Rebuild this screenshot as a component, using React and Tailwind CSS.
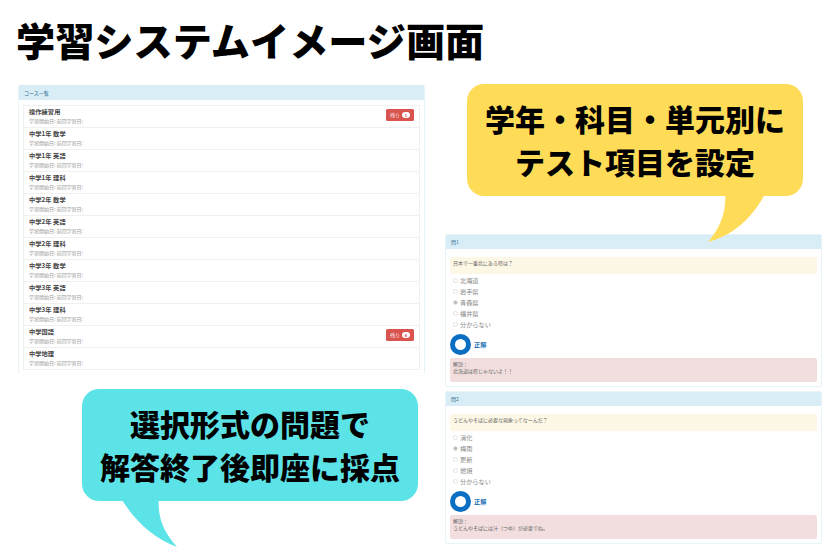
const FONT = { fontFamily: '"Noto Sans CJK JP", "Noto Sans", sans-serif' };
const courses = [
  ["操作練習用", 1], ["中学1年 数学"], ["中学1年 英語"], ["中学1年 理科"],
  ["中学2年 数学"], ["中学2年 英語"], ["中学2年 理科"], ["中学3年 数学"],
  ["中学3年 英語"], ["中学3年 理科"], ["中学国語", 6], ["中学地理"],
];

function CourseRow({ name, badge }) {
  return (
    <div className="h-[22px] shrink-0 border-b border-[#f0f0f0] pl-[5px] pr-[5px] flex items-center justify-between">
      <div className="-mt-px">
        <div className="text-[6.2px] leading-[8.5px] font-bold tracking-[0.1px] text-[#444444]">{name}</div>
        <div className="text-[5px] leading-[7px] text-[#999999]">学習開始日: 前回学習日:</div>
      </div>
      {badge && (
        <div className="-mt-[3px] w-[28px] h-[12px] rounded-[1.5px] bg-[#d9534f] flex items-center justify-center gap-[2px] text-[5px] text-[#fbe4e3]">
          <span>残り</span>
          <span className="w-[8px] h-[6px] rounded-full bg-white text-[#d9534f] text-[4px] leading-[6px] text-center font-bold">{badge}</span>
        </div>
      )}
    </div>
  );
}

function Question({ title, question, options, selected, note }) {
  return (
    <section className="w-[377px] h-[153px] border border-[#e6f3f9] rounded-[2px] overflow-hidden bg-white">
      <div className="h-[14px] bg-[#d9edf7] pl-[5px] text-[5px] leading-[14px] text-[#31708f]">{title}</div>
      <div className="px-[4px] pt-[8px]">
        <div className="h-[17px] bg-[#fdf7e5] rounded-[2px] pl-[3px] pt-[1px] text-[5px] leading-[9px] text-[#666666]">{question}</div>
        <ul className="mt-[1px] pl-[3px]">
          {options.map((o, i) => (
            <li key={o} className="h-[11px] flex items-center gap-[2px] text-[6.2px] text-[#888888]">
              <span className={`w-[5px] h-[5px] rounded-full border border-[#e4e4e4] ${i === selected ? "bg-[#bbbbbb]" : "bg-white"}`} />
              {o}
            </li>
          ))}
        </ul>
        <div className="mt-[4px] h-[21px] flex items-center gap-[3px]">
          <span className="w-[21px] h-[21px] rounded-full border-[5px] border-[#0a6fc2] bg-white" />
          <span className="text-[6.2px] font-bold text-[#1a6fb5]">正解</span>
        </div>
        <div className="mt-[3px] h-[24px] rounded-[2px] bg-[#f2dede] pl-[3px] pt-[2px] text-[5px] leading-[7px] text-[#666666]">
          <div>解説：</div>
          <div>{note}</div>
        </div>
      </div>
    </section>
  );
}

export default function App() {
  return (
    <div className="w-[840px] h-[560px] overflow-hidden bg-white" style={FONT}>
      <h1 className="h-[84px] pl-[16px] pt-[11px] text-[39.2px] leading-[56px] font-black text-black whitespace-nowrap">学習システムイメージ画面</h1>

      <div className="flex">
        <div className="w-[445px] shrink-0 pl-[18px] pt-px">
          <div className="w-[407px] h-[288px] border-x border-[#e6f3f9] rounded-t-[2px] overflow-hidden bg-white">
            <div className="h-[15px] bg-[#d9edf7] pl-[5px] text-[5px] leading-[15px] text-[#31708f]">コース一覧</div>
            <div className="mx-[4px] mt-[5px] border-x border-t border-[#f0f0f0]">
              {courses.map(([n, b]) => <CourseRow key={n} name={n} badge={b} />)}
            </div>
          </div>

          <div className="relative ml-[64px] mt-[16px] w-[336px] h-[112px] rounded-[17px] bg-[#5ce3e8] flex flex-col items-center justify-center text-[30px] leading-[43px] font-black text-black">
            <div>選択形式の問題で</div>
            <div>解答終了後即座に採点</div>
            <svg className="absolute left-[33px] top-[106px]" width="75" height="56" viewBox="0 0 75 56">
              <path d="M4 0 C18 24 36 42 62 52 C48 36 42 22 44 0 Z" fill="#5ce3e8" />
            </svg>
          </div>
        </div>

        <div className="flex-1">
          <div className="relative z-10 ml-[22px] w-[336px] h-[112px] rounded-[17px] bg-[#ffdc58] flex flex-col items-center justify-center text-[30px] leading-[43px] font-black text-black">
            <div>学年・科目・単元別に</div>
            <div>テスト項目を設定</div>
            <svg className="absolute left-[233px] top-[106px]" width="75" height="56" viewBox="0 0 75 56">
              <path d="M25 0 C27 22 20 38 8 52 C36 44 54 26 67 0 Z" fill="#ffdc58" />
            </svg>
          </div>
          <div className="mt-[38px] flex flex-col gap-[4px]">
            <Question title="問1" question="日本で一番北にある県は？" options={["北海道", "岩手県", "青森県", "福井県", "分からない"]} selected={2} note="北海道は県じゃないよ！！" />
            <Question title="問2" question="うどんやそばに必要な現象ってなーんだ？" options={["消化", "梅雨", "更新", "燃焼", "分からない"]} selected={1} note="うどんやそばには汁（つゆ）が必要でね。" />
          </div>
        </div>
      </div>
    </div>
  );
}
